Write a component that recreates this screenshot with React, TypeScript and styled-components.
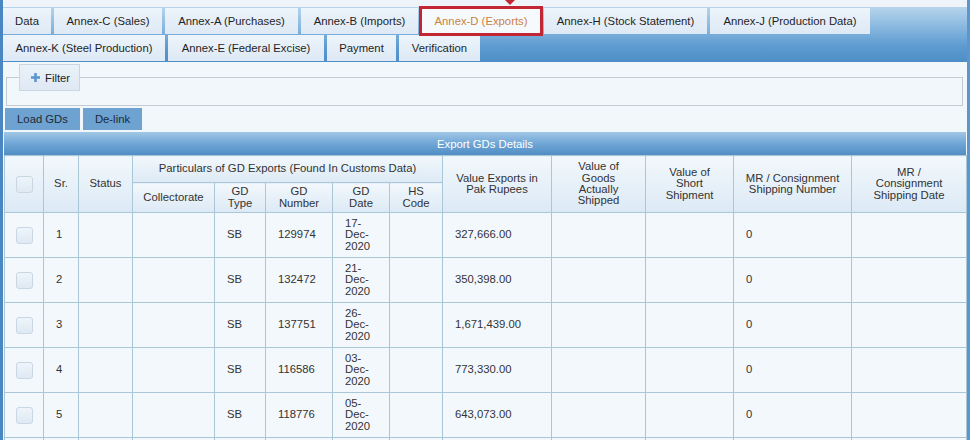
import React from "react";
import styled, { createGlobalStyle } from "styled-components";

const GlobalStyle = createGlobalStyle`
  html, body {
    margin: 0;
    padding: 0;
    background: #eef4f9;
    font-family: "Liberation Sans", Arial, sans-serif;
    font-size: 11.3px;
    color: #222;
  }
  * { box-sizing: border-box; }
`;

const Page = styled.div`
  position: relative;
  width: 970px;
  height: 440px;
  overflow: hidden;
  padding-top: 7px;
  border-left: 3px solid #4a87c2;
  border-right: 3px solid #5b97cc;
  background: #eef4f9;
`;

const Pointer = styled.svg`
  position: absolute;
  left: 499px;
  top: -1px;
`;

const TabHeader = styled.div`
  display: flex;
  flex-wrap: wrap;
  column-gap: 3px;
  row-gap: 1px;
  padding: 1px 0 1px 0;
  background: linear-gradient(to bottom, #b7d4ec 0%, #8ab9e0 35%, #5e9cd0 70%, #4e8ec7 100%);
`;

const Tab = styled.div<{ $w: number; $active?: boolean }>`
  position: relative;
  width: ${(p) => p.$w}px;
  height: 26px;
  display: flex;
  align-items: center;
  justify-content: center;
  white-space: nowrap;
  color: ${(p) => (p.$active ? "#c98245" : "#1f1f1f")};
  background: ${(p) =>
    p.$active
      ? "#f7fafd"
      : "linear-gradient(to bottom, #edf4fb 0%, #dde9f5 100%)"};
  outline: ${(p) => (p.$active ? "3px solid #c22632" : "none")};
  outline-offset: -1px;
  z-index: ${(p) => (p.$active ? 2 : 1)};
`;

const Content = styled.div`
  background: #f2f7fc;
  padding-top: 2px;
`;

const Fieldset = styled.fieldset`
  margin: 0 4px 0 3px;
  padding: 0 0 14px 0;
  border: 1px solid #c5cbd2;
  min-width: 0;
`;

const Legend = styled.legend`
  margin-left: 12px;
  height: 27px;
  padding: 0 9px 0 11px;
  display: flex;
  align-items: center;
  gap: 5px;
  background: linear-gradient(to bottom, #eaf1f8, #dfe9f4);
  border: 1px solid #cad6e2;
  color: #1f1f1f;
`;

const ButtonRow = styled.div`
  display: flex;
  gap: 3px;
  margin: 2px 0 0 2px;
`;

const ActionButton = styled.div<{ $w: number }>`
  width: ${(p) => p.$w}px;
  height: 22px;
  display: flex;
  align-items: center;
  justify-content: center;
  background: #6ea2d1;
  color: #1b2a38;
`;

const GridTitle = styled.div`
  margin: 2px 1px 0 1px;
  height: 23px;
  display: flex;
  align-items: center;
  justify-content: center;
  color: #ffffff;
  background: linear-gradient(to bottom, #a2c7e6 0%, #74a9d8 45%, #508dc5 100%);
`;

const Table = styled.table`
  margin: 0 1px;
  width: 962px;
  table-layout: fixed;
  border-collapse: collapse;
  color: #333;
`;

const Th = styled.th<{ $h?: number }>`
  height: ${(p) => (p.$h ? `${p.$h}px` : "auto")};
  font-weight: normal;
  text-align: center;
  vertical-align: middle;
  line-height: 1;
  padding: 0 4px;
  border: 1px solid #a9c7d6;
  background: linear-gradient(to bottom, #f2f8fc 0%, #dce9f5 100%);
  color: #333;
`;

const Td = styled.td`
  height: 45px;
  padding: 0 4px 0 12px;
  border: 1px solid #a9c7d6;
  background: #f3f8fd;
  vertical-align: middle;
  line-height: 1;
`;

const CheckCell = styled.td`
  height: 45px;
  padding: 0;
  border: 1px solid #a9c7d6;
  background: #f3f8fd;
  vertical-align: middle;
`;

const CheckHeadCell = styled.th`
  padding: 0;
  border: 1px solid #a9c7d6;
  background: linear-gradient(to bottom, #f2f8fc 0%, #dce9f5 100%);
  vertical-align: middle;
`;

const CheckBox = styled.div`
  width: 17px;
  height: 17px;
  margin: 0 auto;
  border: 1px solid #c9d7e4;
  border-radius: 3px;
  background: linear-gradient(to bottom, #eef4fa, #dfe9f3);
`;

const DateText = styled.div`
  width: 32px;
  line-height: 0.98;
`;

const tabsRow = [
  { label: "Data", w: 48 },
  { label: "Annex-C (Sales)", w: 108 },
  { label: "Annex-A (Purchases)", w: 133 },
  { label: "Annex-B (Imports)", w: 117 },
  { label: "Annex-D (Exports)", w: 120, active: true },
  { label: "Annex-H (Stock Statement)", w: 163 },
  { label: "Annex-J (Production Data)", w: 160 },
  { label: "Annex-K (Steel Production)", w: 162 },
  { label: "Annex-E (Federal Excise)", w: 156 },
  { label: "Payment", w: 69 },
  { label: "Verification", w: 81 },
];

const cols = [39, 35, 54, 82, 51, 67, 57, 53, 109, 94, 88, 118, 115];

const rows = [
  { sr: "1", type: "SB", num: "129974", date: ["17-", "Dec-", "2020"], value: "327,666.00", mr: "0" },
  { sr: "2", type: "SB", num: "132472", date: ["21-", "Dec-", "2020"], value: "350,398.00", mr: "0" },
  { sr: "3", type: "SB", num: "137751", date: ["26-", "Dec-", "2020"], value: "1,671,439.00", mr: "0" },
  { sr: "4", type: "SB", num: "116586", date: ["03-", "Dec-", "2020"], value: "773,330.00", mr: "0" },
  { sr: "5", type: "SB", num: "118776", date: ["05-", "Dec-", "2020"], value: "643,073.00", mr: "0" },
];

const PlusIcon = () => (
  <svg width="9" height="9" viewBox="0 0 9 9">
    <rect x="3.2" y="0" width="2.6" height="9" fill="#5c97cd" />
    <rect x="0" y="3.2" width="9" height="2.6" fill="#5c97cd" />
  </svg>
);

export default function App() {
  return (
    <>
      <GlobalStyle />
      <Page>
        <Pointer width="16" height="8" viewBox="0 0 16 8">
          <path d="M2 0 H14 L8 6 Z" fill="#c22632" />
        </Pointer>
        <TabHeader>
          {tabsRow.map((t) => (
            <Tab key={t.label} $w={t.w} $active={t.active}>
              {t.label}
            </Tab>
          ))}
        </TabHeader>
        <Content>
          <Fieldset>
            <Legend>
              <PlusIcon />
              Filter
            </Legend>
          </Fieldset>
          <ButtonRow>
            <ActionButton $w={75}>Load GDs</ActionButton>
            <ActionButton $w={59}>De-link</ActionButton>
          </ButtonRow>
          <GridTitle>Export GDs Details</GridTitle>
          <Table>
            <colgroup>
              {cols.map((w, i) => (
                <col key={i} style={{ width: w }} />
              ))}
            </colgroup>
            <thead>
              <tr>
                <CheckHeadCell rowSpan={2}>
                  <CheckBox />
                </CheckHeadCell>
                <Th rowSpan={2}>Sr.</Th>
                <Th rowSpan={2}>Status</Th>
                <Th colSpan={5} $h={27}>
                  Particulars of GD Exports (Found In Customs Data)
                </Th>
                <Th rowSpan={2}>Value Exports in Pak Rupees</Th>
                <Th rowSpan={2}>
                  Value of
                  <br />
                  Goods
                  <br />
                  Actually
                  <br />
                  Shipped
                </Th>
                <Th rowSpan={2}>
                  Value of
                  <br />
                  Short
                  <br />
                  Shipment
                </Th>
                <Th rowSpan={2}>MR / Consignment Shipping Number</Th>
                <Th rowSpan={2}>
                  MR /<br />
                  Consignment
                  <br />
                  Shipping Date
                </Th>
              </tr>
              <tr>
                <Th $h={30}>Collectorate</Th>
                <Th>
                  GD
                  <br />
                  Type
                </Th>
                <Th>
                  GD
                  <br />
                  Number
                </Th>
                <Th>
                  GD
                  <br />
                  Date
                </Th>
                <Th>
                  HS
                  <br />
                  Code
                </Th>
              </tr>
            </thead>
            <tbody>
              {rows.map((r) => (
                <tr key={r.sr}>
                  <CheckCell>
                    <CheckBox />
                  </CheckCell>
                  <Td>{r.sr}</Td>
                  <Td />
                  <Td />
                  <Td>{r.type}</Td>
                  <Td>{r.num}</Td>
                  <Td>
                    <DateText>
                      {r.date.map((d) => (
                        <div key={d}>{d}</div>
                      ))}
                    </DateText>
                  </Td>
                  <Td />
                  <Td>{r.value}</Td>
                  <Td />
                  <Td />
                  <Td>{r.mr}</Td>
                  <Td />
                </tr>
              ))}
              <tr>
                {cols.map((_, i) => (
                  <Td key={i} />
                ))}
              </tr>
            </tbody>
          </Table>
        </Content>
      </Page>
    </>
  );
}
